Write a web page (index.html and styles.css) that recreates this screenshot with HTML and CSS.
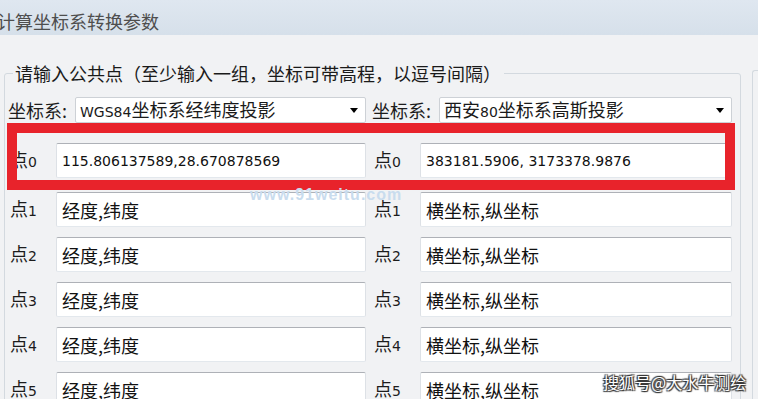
FILE: index.html
```html
<!DOCTYPE html>
<html lang="zh-CN">
<head>
    <meta charset="UTF-8">
    <meta name="viewport" content="width=device-width, initial-scale=1.0">
    <title>计算坐标系转换参数</title>
    <link rel="stylesheet" href="styles.css">
</head>
<body>

<div class="window">
    <div class="titlebar">计算坐标系转换参数</div>

    <div class="client">
        <fieldset class="group">
            <legend>请输入公共点（至少输入一组，坐标可带高程，以逗号间隔）</legend>

            <!-- Pilihan sistem koordinat -->
            <div class="row sys-row">
                <div class="field">
                    <label>坐标系:</label>
                    <div class="combo"><span><span class="latin">WGS84</span>坐标系经纬度投影</span><span class="arrow"></span></div>
                </div>
                <div class="field">
                    <label>坐标系:</label>
                    <div class="combo"><span>西安<span class="latin">80</span>坐标系高斯投影</span><span class="arrow"></span></div>
                </div>
            </div>

            <!-- Titik umum -->
            <div class="row pt-row highlight">
                <div class="field">
                    <label>点<span class="num">0</span></label>
                    <input type="text" class="coord" value="115.806137589,28.670878569">
                </div>
                <div class="field">
                    <label>点<span class="num">0</span></label>
                    <input type="text" class="coord" value="383181.5906, 3173378.9876">
                </div>
            </div>
            <div class="row pt-row">
                <div class="field">
                    <label>点<span class="num">1</span></label>
                    <input type="text" value="经度,纬度">
                </div>
                <div class="field">
                    <label>点<span class="num">1</span></label>
                    <input type="text" value="横坐标,纵坐标">
                </div>
            </div>
            <div class="row pt-row">
                <div class="field">
                    <label>点<span class="num">2</span></label>
                    <input type="text" value="经度,纬度">
                </div>
                <div class="field">
                    <label>点<span class="num">2</span></label>
                    <input type="text" value="横坐标,纵坐标">
                </div>
            </div>
            <div class="row pt-row">
                <div class="field">
                    <label>点<span class="num">3</span></label>
                    <input type="text" value="经度,纬度">
                </div>
                <div class="field">
                    <label>点<span class="num">3</span></label>
                    <input type="text" value="横坐标,纵坐标">
                </div>
            </div>
            <div class="row pt-row">
                <div class="field">
                    <label>点<span class="num">4</span></label>
                    <input type="text" value="经度,纬度">
                </div>
                <div class="field">
                    <label>点<span class="num">4</span></label>
                    <input type="text" value="横坐标,纵坐标">
                </div>
            </div>
            <div class="row pt-row">
                <div class="field">
                    <label>点<span class="num">5</span></label>
                    <input type="text" value="经度,纬度">
                </div>
                <div class="field">
                    <label>点<span class="num">5</span></label>
                    <input type="text" value="横坐标,纵坐标">
                </div>
            </div>
        </fieldset>

        <div class="side-panel"></div>
    </div>

    <div class="wm-site">www.91weitu.com</div>
    <div class="wm-sohu">搜狐号@大水牛测绘</div>
</div>

</body>
</html>
```

FILE: styles.css
```css
/* Jendela utama */
* {
    box-sizing: border-box;
}

body {
    margin: 0;
    background-color: #f1f2f4;
    font-family: "Noto Sans CJK SC", sans-serif;
    color: #1a1a1a;
}

.window {
    position: relative;
    width: 758px;
    height: 399px;
    overflow: hidden;
    background-color: #f1f2f4;
}

/* Judul */
.titlebar {
    height: 35px;
    padding-top: 8px;
    text-indent: -3px;
    line-height: 26px;
    font-size: 18px;
    color: #4e4e4e;
    white-space: nowrap;
    background: linear-gradient(#dfe7f0, #d6e0ea);
}

.client {
    display: flex;
    align-items: flex-start;
    padding: 26px 0 0 4px;
}

/* Group box */
.group {
    flex: none;
    width: 737px;
    min-width: 0;
    height: 380px;
    margin: 0;
    padding: 12px 0 0 3px;
    border: 1px solid #d3d9df;
    border-radius: 3px;
}

.group legend {
    margin-left: 5px;
    padding: 0 3px 0 2px;
    font-size: 18px;
    line-height: 24px;
    color: #1a1a1a;
}

.side-panel {
    flex: none;
    width: 20px;
    height: 340px;
    margin: 9px 0 0 11px;
    border-left: 1px solid #d3d9df;
    border-top: 1px solid #d3d9df;
    border-radius: 3px 0 0 0;
}

/* Baris */
.row {
    display: grid;
    grid-template-columns: 358px 360px;
    column-gap: 6px;
}

.field {
    display: flex;
    align-items: center;
}

.field label {
    font-size: 18px;
    line-height: 26px;
    color: #1c1c1c;
    white-space: nowrap;
}

.latin, .num {
    font-family: "DejaVu Sans", sans-serif;
    font-size: 14px;
}

/* Combo box */
.sys-row {
    height: 26px;
}

.sys-row label {
    width: 67px;
}

.combo {
    flex: 1;
    height: 26px;
    display: flex;
    align-items: center;
    justify-content: space-between;
    padding: 0 7px 0 4px;
    background-color: #fff;
    border: 1px solid #cdd1d6;
    border-radius: 2px;
    font-size: 18px;
    line-height: 24px;
    white-space: nowrap;
}

.combo .arrow {
    width: 0;
    height: 0;
    border-left: 4px solid transparent;
    border-right: 4px solid transparent;
    border-top: 5px solid #000;
}

/* Input titik */
.pt-row {
    height: 35px;
    margin-top: 10px;
}

.pt-row label {
    width: 48px;
    padding-left: 2px;
}

.pt-row input {
    flex: 1;
    min-width: 0;
    height: 35px;
    padding: 0 5px;
    border: 1px solid;
    border-color: #aeb1b7 #dde1e6 #e3e8ed #dde1e6;
    border-radius: 2px;
    background-color: #fff;
    font-family: "Noto Sans CJK SC", sans-serif;
    font-size: 18px;
    color: #111;
    outline: none;
}

.pt-row input.coord {
    font-family: "DejaVu Sans", sans-serif;
    font-size: 14px;
}

/* Kotak merah di atas baris pertama */
.highlight {
    position: relative;
    height: auto;
    margin-top: 0;
    padding: 20px 0 12px;
}

.highlight::after {
    content: "";
    position: absolute;
    top: 0;
    bottom: 0;
    left: -1px;
    right: 5px;
    border: 10px solid #e8232b;
}

.highlight + .pt-row {
    margin-top: 2px;
}

/* Watermark */
.wm-site {
    position: absolute;
    left: 250px;
    top: 186px;
    font-family: "Liberation Sans", sans-serif;
    font-weight: bold;
    font-size: 16px;
    letter-spacing: 1px;
    color: #c9dcee;
    pointer-events: none;
}

.wm-sohu {
    position: absolute;
    left: 603px;
    top: 370px;
    font-size: 16px;
    line-height: 24px;
    color: #fff;
    text-shadow: 1px 1px 1px #333, -1px -1px 1px #333, 1px -1px 1px #333, -1px 1px 1px #333;
    white-space: nowrap;
}
```
